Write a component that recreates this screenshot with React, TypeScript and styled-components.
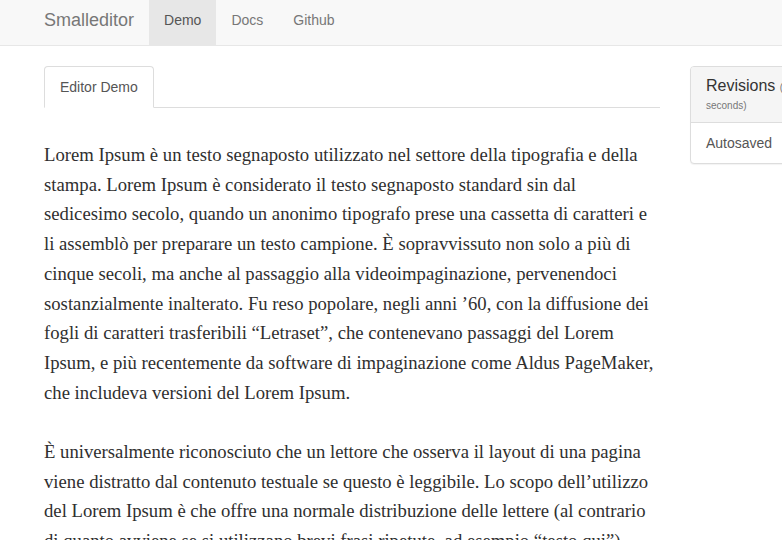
import React from "react";
import styled, { createGlobalStyle } from "styled-components";

const Global = createGlobalStyle`
  html, body { margin: 0; padding: 0; overflow: hidden; background: #fff; }
  body { font-family: "Liberation Sans", Arial, sans-serif; font-size: 14px; color: #333; }
  * { box-sizing: border-box; }
`;

const Navbar = styled.nav`
  height: 46px;
  background: #f8f8f8;
  border-bottom: 1px solid #e7e7e7;
  display: flex;
  align-items: stretch;
  padding-left: 29px;
`;

const Brand = styled.a`
  padding: 9px 15px 0;
  line-height: 22px;
  font-size: 18px;
  color: #777;
  text-decoration: none;
`;

const NavLink = styled.a<{ $active?: boolean }>`
  padding: 10px 15px 0;
  line-height: 20px;
  font-size: 14px;
  color: ${(p) => (p.$active ? "#555" : "#777")};
  background: ${(p) => (p.$active ? "#e7e7e7" : "transparent")};
  text-decoration: none;
`;

const Page = styled.div`
  display: flex;
  gap: 30px;
  padding: 20px 0 0 44px;
`;

const Main = styled.div`
  width: 616px;
  flex: none;
`;

const Tabs = styled.div`
  display: flex;
  border-bottom: 1px solid #ddd;
`;

const Tab = styled.div`
  padding: 10px 15px;
  line-height: 20px;
  font-size: 14px;
  color: #555;
  background: #fff;
  border: 1px solid #ddd;
  border-bottom-color: transparent;
  border-radius: 4px 4px 0 0;
  margin-bottom: -1px;
`;

const Editor = styled.div`
  padding-top: 32px;
  font-family: "Liberation Serif", "Times New Roman", serif;
  font-size: 18.7px;
  line-height: 29.7px;
  color: #2f2f2f;
`;

const Para = styled.p`
  margin: 0 0 29.7px;
`;

const Line = styled.span`
  display: block;
  white-space: nowrap;
`;

const Sidebar = styled.div`
  width: 220px;
  flex: none;
`;

const Panel = styled.div`
  border: 1px solid #ddd;
  border-radius: 4px;
  background: #fff;
  box-shadow: 0 1px 1px rgba(0, 0, 0, 0.05);
`;

const PanelHeading = styled.div`
  background: #f5f5f5;
  border-bottom: 1px solid #ddd;
  padding: 10px 15px;
  border-radius: 3px 3px 0 0;
`;

const PanelTitle = styled.h3`
  margin: 0;
  font-size: 16px;
  font-weight: normal;
  line-height: 17.6px;
  color: #333;
`;

const Small = styled.small`
  font-size: 10px;
  color: #777;
  line-height: 1;
`;

const ListItem = styled.div`
  padding: 10px 15px;
  line-height: 20px;
  font-size: 14px;
  color: #555;
`;

const p1 = [
  "Lorem Ipsum è un testo segnaposto utilizzato nel settore della tipografia e della",
  "stampa. Lorem Ipsum è considerato il testo segnaposto standard sin dal",
  "sedicesimo secolo, quando un anonimo tipografo prese una cassetta di caratteri e",
  "li assemblò per preparare un testo campione. È sopravvissuto non solo a più di",
  "cinque secoli, ma anche al passaggio alla videoimpaginazione, pervenendoci",
  "sostanzialmente inalterato. Fu reso popolare, negli anni ’60, con la diffusione dei",
  "fogli di caratteri trasferibili “Letraset”, che contenevano passaggi del Lorem",
  "Ipsum, e più recentemente da software di impaginazione come Aldus PageMaker,",
  "che includeva versioni del Lorem Ipsum.",
];

const p2 = [
  "È universalmente riconosciuto che un lettore che osserva il layout di una pagina",
  "viene distratto dal contenuto testuale se questo è leggibile. Lo scopo dell’utilizzo",
  "del Lorem Ipsum è che offre una normale distribuzione delle lettere (al contrario",
  "di quanto avviene se si utilizzano brevi frasi ripetute, ad esempio “testo qui”),",
  "apparendo come un normale blocco di testo leggibile.",
];

export default function App() {
  return (
    <>
      <Global />
      <Navbar>
        <Brand href="#">Smalleditor</Brand>
        <NavLink href="#" $active>Demo</NavLink>
        <NavLink href="#">Docs</NavLink>
        <NavLink href="#">Github</NavLink>
      </Navbar>
      <Page>
        <Main>
          <Tabs>
            <Tab>Editor Demo</Tab>
          </Tabs>
          <Editor>
            <Para>{p1.map((l, i) => <Line key={i}>{l}</Line>)}</Para>
            <Para>{p2.map((l, i) => <Line key={i}>{l}</Line>)}</Para>
          </Editor>
        </Main>
        <Sidebar>
          <Panel>
            <PanelHeading>
              <PanelTitle>
                Revisions <Small>(autosaved every 30 seconds)</Small>
              </PanelTitle>
            </PanelHeading>
            <ListItem>Autosaved</ListItem>
          </Panel>
        </Sidebar>
      </Page>
    </>
  );
}
